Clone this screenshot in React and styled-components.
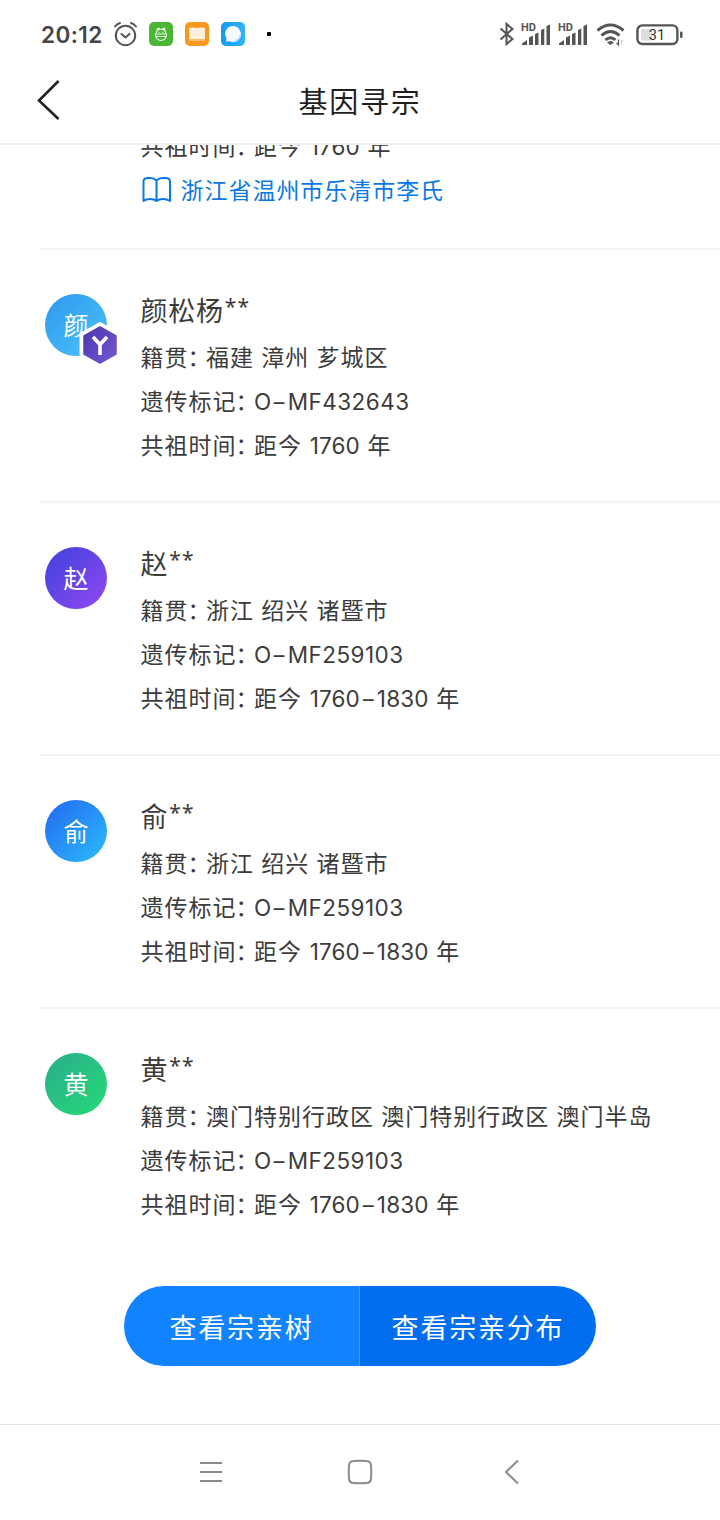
import React from "react";
import styled, { createGlobalStyle } from "styled-components";

const Global = createGlobalStyle`
  * { box-sizing: border-box; }
  body { margin: 0; background: #fff; }
`;

const cjk = `"Noto Sans CJK SC", sans-serif`;

const Screen = styled.div`
  width: 720px;
  height: 1520px;
  display: flex;
  flex-direction: column;
  overflow: hidden;
  background: #fff;
  color: #3c3c3c;
  font-family: ${cjk};
`;

const StatusBar = styled.div`
  height: 69px;
  flex: none;
  display: flex;
  justify-content: space-between;
  padding: 0 37px 0 41px;
`;

const StatusGroup = styled.div`
  display: flex;
  align-items: center;
  height: 68px;
`;

const Clock = styled.span`
  width: 72px;
  font: 600 22.5px/30px Inter, sans-serif;
  letter-spacing: 0.4px;
  padding-top: 1px;
  color: #454545;
`;

const StatusIcon = styled.svg`
  display: block;
  flex: none;
  overflow: visible;
  margin-right: ${(p) => p.$gap || 0}px;
`;

const Header = styled.header`
  height: 76px;
  flex: none;
  display: grid;
  grid-template-columns: 96px 1fr 96px;
  align-items: center;
  padding-bottom: 13px;
  border-bottom: 2px solid #efefef;
`;

const BackButton = styled.button`
  border: 0;
  padding: 1px 0 0 36px;
  background: none;
  display: flex;
`;

const Title = styled.h1`
  margin: 0;
  text-align: center;
  font-size: 29px;
  line-height: 44px;
  font-weight: 400;
  letter-spacing: 1.8px;
  color: #1f1f1f;
`;

const List = styled.main`
  height: 1104px;
  flex: none;
  overflow: hidden;
`;

const Row = styled.section`
  display: flex;
  height: 253px;
  margin-left: 40px;
  padding: 38px 0 0 5px;
  border-top: 2px solid #f4f4f4;
`;

const ClippedRow = styled.section`
  height: 125px;
  margin: -22px 0 0 140.6px;
`;

const Avatar = styled.div`
  position: relative;
  width: 62px;
  height: 62px;
  margin: 6px 33.6px 0 0;
  flex: none;
  border-radius: 50%;
  background: linear-gradient(135deg, ${(p) => p.$from}, ${(p) => p.$to});
  color: #fff;
  font-size: 25px;
  line-height: 61px;
  text-align: center;
`;

const Badge = styled.svg`
  position: absolute;
  left: 33px;
  top: 27px;
`;

const Details = styled.div`
  min-width: 0;
`;

const Name = styled.h2`
  margin: 0 0 2px;
  height: 44px;
  display: flex;
  font-size: 27px;
  line-height: 43px;
  font-weight: 400;
  letter-spacing: 0.7px;
`;

const Stars = styled.span`
  font: 400 21px/37px "Noto Sans", sans-serif;
  letter-spacing: 1.2px;
  margin-left: 1px;
`;

const Line = styled.p`
  margin: 0;
  height: 44px;
  display: flex;
  font-size: 23px;
  line-height: 44px;
  letter-spacing: 1px;
  white-space: pre;
`;

const Colon = styled.span`
  width: 18.5px;
  margin-left: -1px;
  font-feature-settings: "halt" 1;
`;

const Value = styled.span`
  word-spacing: 1.1px;
`;

const Latin = styled.span`
  font-family: Inter, ${cjk};
  font-size: 22.5px;
  letter-spacing: ${(p) => p.$track}px;
`;

const Dash = styled.span`
  display: inline-block;
  margin: 0 ${(p) => p.$space || 3.2}px;
  transform: scaleX(1.5);
`;

const BookLink = styled.a`
  height: 44px;
  display: flex;
  align-items: center;
  gap: 9px;
  color: #0b78e3;
  font-size: 23px;
  line-height: 44px;
  letter-spacing: 0.95px;
`;

const Actions = styled.div`
  height: 80px;
  width: 472px;
  flex: none;
  margin: 37px auto 58px;
  display: grid;
  grid-template-columns: 1fr 1fr;
  border-radius: 40px;
  overflow: hidden;
`;

const Action = styled.button`
  border: 0;
  border-right: ${(p) => (p.$primary ? "0" : "1px solid #3c9bff")};
  padding: 1px 0 0;
  background: ${(p) => (p.$primary ? "#006eee" : "#1283ff")};
  color: #fff;
  font: 400 27px/40px ${cjk};
  letter-spacing: 1.8px;
`;

const NavBar = styled.nav`
  height: 96px;
  flex: none;
  display: flex;
  gap: 123px;
  align-items: center;
  padding: 0 0 1px 198px;
  border-top: 1px solid #e2e2e2;
`;

const Signal = () => (
  <StatusIcon $gap={7} width="30" height="24" viewBox="0 0 30 24">
    <text x="0" y="8.500" fontFamily="Roboto, sans-serif" fontSize="11" fontWeight="700" fill="#555">HD</text>
    <path d="M1 23v-1.500l5-3.500v5zM8 23v-7.500l4-2v9.500zM14 23v-11l3.500-1.500v12.500zM20 23v-15l3.300-1.500v16.500zM25.500 23v-19l3.500-1.500v20.500z" fill="#555" />
  </StatusIcon>
);

const people = [
  { name: "颜松杨", initial: "颜", from: "#2d98ef", to: "#4dc4f7", place: "福建 漳州 芗城区", code: "432643", years: ["1760"], verified: true },
  { name: "赵", initial: "赵", from: "#3f43dc", to: "#9147f2", place: "浙江 绍兴 诸暨市", code: "259103", years: ["1760", "1830"] },
  { name: "俞", initial: "俞", from: "#2468f0", to: "#2bbcfc", place: "浙江 绍兴 诸暨市", code: "259103", years: ["1760", "1830"] },
  { name: "黄", initial: "黄", from: "#2bac8c", to: "#25da76", place: "澳门特别行政区 澳门特别行政区 澳门半岛", code: "259103", years: ["1760", "1830"] },
];

const Ancestry = ({ years }) => (
  <Line>
    共祖时间<Colon>：</Colon>
    <Value>
      距今
      <Latin $track={0.15}>
        {" "}{years[0]}
        {years[1] && <><Dash>-</Dash>{years[1]}</>}
        {" "}
      </Latin>
      年
    </Value>
  </Line>
);

const Person = ({ person }) => (
  <Row>
    <Avatar $from={person.from} $to={person.to}>
      {person.initial}
      {person.verified && (
        <Badge width="44" height="46" viewBox="0 0 44 46">
          <defs>
            <linearGradient id="hex" x1="0" y1="0" x2="1" y2="1">
              <stop offset="0" stopColor="#4938ad" />
              <stop offset="1" stopColor="#7656d4" />
            </linearGradient>
          </defs>
          <path d="M22 2.500L41 13v20L22 43.500L3 33V13z" fill="#fff" stroke="#fff" strokeWidth="3" strokeLinejoin="round" />
          <path d="M22 6L38 15v18L22 42L6 33V15z" fill="url(#hex)" stroke="url(#hex)" strokeWidth="1.500" strokeLinejoin="round" />
          <path d="M15 16L22 23.500L29 16M22 22.500v11.500" fill="none" stroke="#fff" strokeWidth="3.600" />
        </Badge>
      )}
    </Avatar>
    <Details>
      <Name>{person.name}<Stars>**</Stars></Name>
      <Line>籍贯<Colon>：</Colon><Value>{person.place}</Value></Line>
      <Line>
        遗传标记<Colon>：</Colon>
        <Value><Latin $track={0.45}>O<Dash $space={2.6}>-</Dash>MF{person.code}</Latin></Value>
      </Line>
      <Ancestry years={person.years} />
    </Details>
  </Row>
);

export default function App() {
  return (
    <Screen>
      <Global />
      <StatusBar>
        <StatusGroup>
          <Clock>20:12</Clock>
          <StatusIcon $gap={11} width="25" height="26" viewBox="0 0 25 26" fill="none" stroke="#555" strokeWidth="2" strokeLinecap="round" strokeLinejoin="round">
            <circle cx="12.500" cy="14.500" r="9.700" />
            <path d="M8.500 13l4 3.500 4-3.500M2 5.500Q4 3 7 2M23 5.500Q21 3 18 2" />
          </StatusIcon>
          <StatusIcon $gap={12} width="24" height="24" viewBox="0 0 24 24">
            <rect width="24" height="24" rx="5" fill="#4bb636" />
            <path d="M6.500 12h11v1a5.500 5.500 0 0 1-11 0zM7 12c0-2.500 1-3.500 2.500-4.500M17 12c0-2.500-1-3.500-2.500-4.500M9.500 7.500h5M8 8.500l.3-2 2-.2.200 1.200M16 8.500l-.3-2-2-.2-.200 1.200M7 14.500h10M10 9.800v.9M14 9.800v.9" fill="none" stroke="#e9f8e5" strokeWidth="1.100" />
          </StatusIcon>
          <StatusIcon $gap={12} width="24" height="24" viewBox="0 0 24 24">
            <rect width="24" height="24" rx="5" fill="#f9981c" />
            <path d="M4 6q4-1 8 0 4-1 8 0V17.500q-4-.6-8 0-4-.6-8 0z" fill="#fff1df" />
            <path d="M4 18.500q4-.6 8 .3 4-.9 8-.3" fill="none" stroke="#ffc77d" strokeWidth="1" />
          </StatusIcon>
          <StatusIcon $gap={22} width="24" height="24" viewBox="0 0 24 24">
            <defs>
              <linearGradient id="msg" x1="0" y1="0" x2="1" y2="0">
                <stop offset="0" stopColor="#139bee" />
                <stop offset="1" stopColor="#2fb4fb" />
              </linearGradient>
            </defs>
            <rect width="24" height="24" rx="5" fill="url(#msg)" />
            <path d="M12 4a8 8 0 1 1-4 15l-3 .8.500-3.300A8 8 0 0 1 12 4z" fill="#f7fbff" />
            <path d="M19.800 10.500A8 8 0 0 1 9 19.600Q17 18 19.800 10.500z" fill="#c9e4fb" />
          </StatusIcon>
          <StatusIcon width="4" height="4" viewBox="0 0 4 4"><rect width="4" height="4" rx="1" fill="#000" /></StatusIcon>
        </StatusGroup>
        <StatusGroup>
          <StatusIcon $gap={6} width="16" height="24" viewBox="0 0 16 24" fill="none" stroke="#555" strokeWidth="2">
            <path d="M1.500 6.500L13.500 17 7.500 22V2l6 5L1.500 17.500" />
          </StatusIcon>
          <Signal />
          <Signal />
          <StatusIcon $gap={10} width="31" height="24" viewBox="-1 0 31 24" fill="none" stroke="#555" strokeWidth="3">
            <path d="M1.500 8.500Q14.500 -2.500 27.500 8.500M5.500 13.500Q14.500 5.500 23.500 13.500M9.500 18Q14.500 13.500 19.500 18" />
            <path d="M14.500 23l-3.500-2.500q3.500-3 7 0z" fill="#555" stroke="none" />
            <path d="M22.500 17.500v5.500l-2-2" strokeWidth="1.200" />
            <path d="M25.500 23v-5l1.500 1.500" strokeWidth="1" stroke="#ccc" />
          </StatusIcon>
          <StatusIcon width="47" height="22" viewBox="0 -1 47 22">
            <rect x="1.400" y="1.400" width="40" height="18.600" rx="5" fill="#fff" stroke="#555" strokeWidth="2.400" />
            <rect x="5" y="5" width="11" height="11.500" rx="1" fill="#dedede" />
            <rect x="44" y="7.500" width="2.500" height="6.500" rx="1" fill="#555" />
            <text x="21" y="16" textAnchor="middle" fontFamily="Roboto, sans-serif" fontSize="14.500" fontWeight="400" fill="#333">31</text>
          </StatusIcon>
        </StatusGroup>
      </StatusBar>

      <Header>
        <BackButton aria-label="返回">
          <svg width="24" height="40" viewBox="0 0 24 40" fill="none" stroke="#222" strokeWidth="2.600">
            <path d="M22.500 1L3 20.500 22.500 39" />
          </svg>
        </BackButton>
        <Title>基因寻宗</Title>
      </Header>

      <List>
        <ClippedRow>
          <Ancestry years={["1760"]} />
          <BookLink>
            <svg width="31" height="26" viewBox="0 0 31 26" fill="none" stroke="#0b78e3" strokeWidth="2" strokeLinejoin="round">
              <path d="M15.500 4.500Q13 2 9.500 2H6.500Q3.500 2 2.500 4.500V25Q5 23 9 23 13 23 15.500 25 18 23 22 23 26 23 29 25V4.500Q28 2 25 2H21.500Q18 2 15.500 4.500zV24.500" />
            </svg>
            浙江省温州市乐清市李氏
          </BookLink>
        </ClippedRow>
        {people.map((person) => <Person key={person.name} person={person} />)}
      </List>

      <Actions>
        <Action>查看宗亲树</Action>
        <Action $primary>查看宗亲分布</Action>
      </Actions>

      <NavBar>
        <svg width="26" height="26" viewBox="0 0 26 26" stroke="#8a8a8a" strokeWidth="2">
          <path d="M2 4h22M2 13h22M2 22h22" />
        </svg>
        <svg width="26" height="26" viewBox="0 0 26 26" fill="none" stroke="#8a8a8a" strokeWidth="2">
          <path d="M7 2Q13 1.300 19 2 24 2 24 7 24.700 13 24 19 24 24 19 24 13 24.700 7 24 2 24 2 19 1.300 13 2 7 2 2 7 2z" />
        </svg>
        <svg width="32" height="26" viewBox="0 0 32 26" fill="none" stroke="#8a8a8a" strokeWidth="2">
          <path d="M22 1.500L10 13 22 24.500" />
        </svg>
      </NavBar>
    </Screen>
  );
}
